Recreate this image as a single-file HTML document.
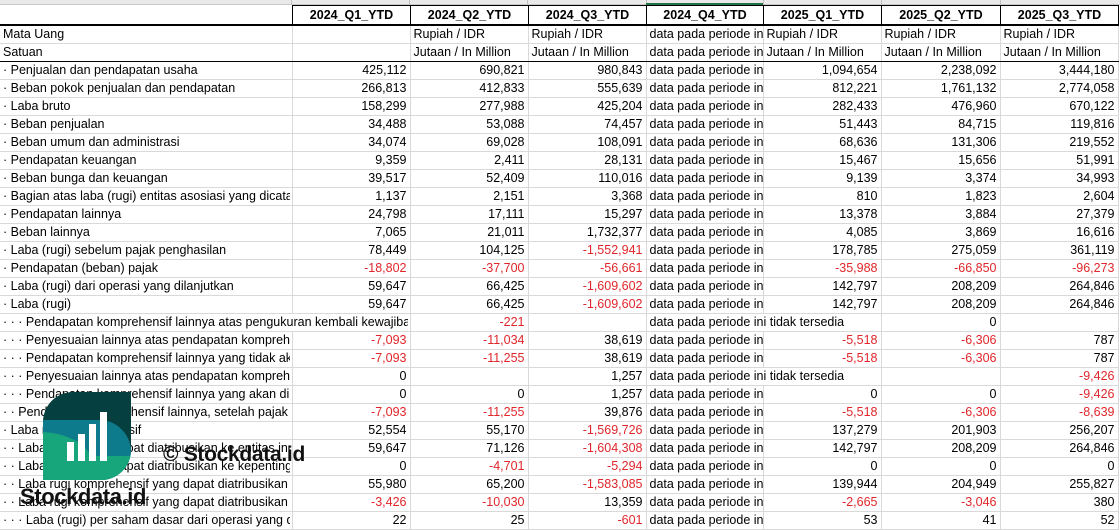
<!DOCTYPE html>
<html><head><meta charset="utf-8">
<style>
body{margin:0;width:1120px;height:530px;overflow:hidden;background:#fff;font-family:"Liberation Sans",Arial,sans-serif;position:relative}
.top{position:absolute;left:0;top:0;width:1120px;height:5px;background:#e9e9e9;border-bottom:1px solid #c8c8c8;box-sizing:border-box}
.top i{position:absolute;top:0;height:5px;width:1px;background:#c0c0c0}
table{position:absolute;left:0;top:5px;width:1118px;border-collapse:collapse;table-layout:fixed;font-size:12.5px;color:#000}
td{height:17px;padding:0 2px 0 3px;border:1px solid #d9d9d9;white-space:nowrap;overflow:hidden;line-height:17px;text-overflow:clip;max-width:0}
td>div{overflow:hidden;white-space:nowrap}
tr.h td{height:18px;font-weight:bold;text-align:center;border:1px solid #000;border-bottom:2px solid #000}
tr.h td.a{border-left:none;border-top:none}
tr.s td{border-bottom:1.5px solid #000}
td.n{text-align:right;padding-right:3px}
.r{color:#e0262b}
td:first-child{border-left:none}
.wm1{position:absolute;left:163px;top:443px;font-weight:bold;font-size:21px;letter-spacing:-0.3px;color:#111}
.wm2{position:absolute;left:20px;top:484px;font-weight:bold;font-size:22px;letter-spacing:-0.4px;color:#111}
</style></head><body>
<div class="top"><i style="left:291px"></i><i style="left:409px"></i><i style="left:527px"></i><i style="left:646px"></i><i style="left:763px"></i><i style="left:881px"></i><i style="left:1000px"></i><div style="position:absolute;left:646px;width:117px;top:3px;height:2px;background:#217346"></div></div>
<table>
<colgroup><col style="width:292px"><col style="width:118px"><col style="width:118px"><col style="width:118px"><col style="width:117px"><col style="width:118px"><col style="width:119px"><col style="width:118px"></colgroup>
<tr class="h"><td class="a"></td><td>2024_Q1_YTD</td><td>2024_Q2_YTD</td><td>2024_Q3_YTD</td><td>2024_Q4_YTD</td><td>2025_Q1_YTD</td><td>2025_Q2_YTD</td><td>2025_Q3_YTD</td></tr>
<tr><td>Mata Uang</td><td></td><td>Rupiah / IDR</td><td>Rupiah / IDR</td><td>data pada periode ini</td><td>Rupiah / IDR</td><td>Rupiah / IDR</td><td>Rupiah / IDR</td></tr>
<tr class="s"><td>Satuan</td><td></td><td>Jutaan / In Million</td><td>Jutaan / In Million</td><td>data pada periode ini</td><td>Jutaan / In Million</td><td>Jutaan / In Million</td><td>Jutaan / In Million</td></tr>
<tr><td>· Penjualan dan pendapatan usaha</td><td class="n">425,112</td><td class="n">690,821</td><td class="n">980,843</td><td>data pada periode ini</td><td class="n">1,094,654</td><td class="n">2,238,092</td><td class="n">3,444,180</td></tr>
<tr><td>· Beban pokok penjualan dan pendapatan</td><td class="n">266,813</td><td class="n">412,833</td><td class="n">555,639</td><td>data pada periode ini</td><td class="n">812,221</td><td class="n">1,761,132</td><td class="n">2,774,058</td></tr>
<tr><td>· Laba bruto</td><td class="n">158,299</td><td class="n">277,988</td><td class="n">425,204</td><td>data pada periode ini</td><td class="n">282,433</td><td class="n">476,960</td><td class="n">670,122</td></tr>
<tr><td>· Beban penjualan</td><td class="n">34,488</td><td class="n">53,088</td><td class="n">74,457</td><td>data pada periode ini</td><td class="n">51,443</td><td class="n">84,715</td><td class="n">119,816</td></tr>
<tr><td>· Beban umum dan administrasi</td><td class="n">34,074</td><td class="n">69,028</td><td class="n">108,091</td><td>data pada periode ini</td><td class="n">68,636</td><td class="n">131,306</td><td class="n">219,552</td></tr>
<tr><td>· Pendapatan keuangan</td><td class="n">9,359</td><td class="n">2,411</td><td class="n">28,131</td><td>data pada periode ini</td><td class="n">15,467</td><td class="n">15,656</td><td class="n">51,991</td></tr>
<tr><td>· Beban bunga dan keuangan</td><td class="n">39,517</td><td class="n">52,409</td><td class="n">110,016</td><td>data pada periode ini</td><td class="n">9,139</td><td class="n">3,374</td><td class="n">34,993</td></tr>
<tr><td><div>· Bagian atas laba (rugi) entitas asosiasi yang dicatat</div></td><td class="n">1,137</td><td class="n">2,151</td><td class="n">3,368</td><td>data pada periode ini</td><td class="n">810</td><td class="n">1,823</td><td class="n">2,604</td></tr>
<tr><td>· Pendapatan lainnya</td><td class="n">24,798</td><td class="n">17,111</td><td class="n">15,297</td><td>data pada periode ini</td><td class="n">13,378</td><td class="n">3,884</td><td class="n">27,379</td></tr>
<tr><td>· Beban lainnya</td><td class="n">7,065</td><td class="n">21,011</td><td class="n">1,732,377</td><td>data pada periode ini</td><td class="n">4,085</td><td class="n">3,869</td><td class="n">16,616</td></tr>
<tr><td>· Laba (rugi) sebelum pajak penghasilan</td><td class="n">78,449</td><td class="n">104,125</td><td class="n r">-1,552,941</td><td>data pada periode ini</td><td class="n">178,785</td><td class="n">275,059</td><td class="n">361,119</td></tr>
<tr><td>· Pendapatan (beban) pajak</td><td class="n r">-18,802</td><td class="n r">-37,700</td><td class="n r">-56,661</td><td>data pada periode ini</td><td class="n r">-35,988</td><td class="n r">-66,850</td><td class="n r">-96,273</td></tr>
<tr><td>· Laba (rugi) dari operasi yang dilanjutkan</td><td class="n">59,647</td><td class="n">66,425</td><td class="n r">-1,609,602</td><td>data pada periode ini</td><td class="n">142,797</td><td class="n">208,209</td><td class="n">264,846</td></tr>
<tr><td>· Laba (rugi)</td><td class="n">59,647</td><td class="n">66,425</td><td class="n r">-1,609,602</td><td>data pada periode ini</td><td class="n">142,797</td><td class="n">208,209</td><td class="n">264,846</td></tr>
<tr><td colspan="2"><div>· · · Pendapatan komprehensif lainnya atas pengukuran kembali kewajiban imbalan pasti</div></td><td class="n r">-221</td><td></td><td colspan="2"><div>data pada periode ini tidak tersedia</div></td><td class="n">0</td><td></td></tr>
<tr><td><div>· · · Penyesuaian lainnya atas pendapatan komprehensif</div></td><td class="n r">-7,093</td><td class="n r">-11,034</td><td class="n">38,619</td><td>data pada periode ini</td><td class="n r">-5,518</td><td class="n r">-6,306</td><td class="n">787</td></tr>
<tr><td><div>· · · Pendapatan komprehensif lainnya yang tidak akan</div></td><td class="n r">-7,093</td><td class="n r">-11,255</td><td class="n">38,619</td><td>data pada periode ini</td><td class="n r">-5,518</td><td class="n r">-6,306</td><td class="n">787</td></tr>
<tr><td><div>· · · Penyesuaian lainnya atas pendapatan komprehensif</div></td><td class="n">0</td><td></td><td class="n">1,257</td><td colspan="2"><div>data pada periode ini tidak tersedia</div></td><td></td><td class="n r">-9,426</td></tr>
<tr><td><div>· · · Pendapatan komprehensif lainnya yang akan direklasifikasi</div></td><td class="n">0</td><td class="n">0</td><td class="n">1,257</td><td>data pada periode ini</td><td class="n">0</td><td class="n">0</td><td class="n r">-9,426</td></tr>
<tr><td>· · Pendapatan komprehensif lainnya, setelah pajak</td><td class="n r">-7,093</td><td class="n r">-11,255</td><td class="n">39,876</td><td>data pada periode ini</td><td class="n r">-5,518</td><td class="n r">-6,306</td><td class="n r">-8,639</td></tr>
<tr><td>· Laba rugi komprehensif</td><td class="n">52,554</td><td class="n">55,170</td><td class="n r">-1,569,726</td><td>data pada periode ini</td><td class="n">137,279</td><td class="n">201,903</td><td class="n">256,207</td></tr>
<tr><td><div>· · Laba (rugi) yang dapat diatribusikan ke entitas induk</div></td><td class="n">59,647</td><td class="n">71,126</td><td class="n r">-1,604,308</td><td>data pada periode ini</td><td class="n">142,797</td><td class="n">208,209</td><td class="n">264,846</td></tr>
<tr><td><div>· · Laba (rugi) yang dapat diatribusikan ke kepentingan</div></td><td class="n">0</td><td class="n r">-4,701</td><td class="n r">-5,294</td><td>data pada periode ini</td><td class="n">0</td><td class="n">0</td><td class="n">0</td></tr>
<tr><td><div>· · Laba rugi komprehensif yang dapat diatribusikan</div></td><td class="n">55,980</td><td class="n">65,200</td><td class="n r">-1,583,085</td><td>data pada periode ini</td><td class="n">139,944</td><td class="n">204,949</td><td class="n">255,827</td></tr>
<tr><td><div>· · Laba rugi komprehensif yang dapat diatribusikan</div></td><td class="n r">-3,426</td><td class="n r">-10,030</td><td class="n">13,359</td><td>data pada periode ini</td><td class="n r">-2,665</td><td class="n r">-3,046</td><td class="n">380</td></tr>
<tr><td><div>· · · Laba (rugi) per saham dasar dari operasi yang dilanjutkan</div></td><td class="n">22</td><td class="n">25</td><td class="n r">-601</td><td>data pada periode ini</td><td class="n">53</td><td class="n">41</td><td class="n">52</td></tr>
</table>
<svg style="position:absolute;left:43px;top:392px" width="88" height="88" viewBox="0 0 88 88">
<defs><clipPath id="c"><path d="M30 0H88V58A30 30 0 0 1 58 88H0V30A30 30 0 0 1 30 0Z"/></clipPath></defs>
<g clip-path="url(#c)">
<rect width="88" height="88" fill="#053f40"/>
<path d="M0 28H56A32 32 0 0 1 88 60V88H0Z" fill="#0e7b8d"/>
<path d="M0 40C25 42 40 50 48 64H88V88H0Z" fill="#17a57c"/>
</g>
<rect x="24" y="50" width="7" height="19" fill="#fff"/>
<rect x="35" y="42" width="7" height="27" fill="#fff"/>
<rect x="46" y="32" width="7" height="37" fill="#fff"/>
<rect x="57" y="20" width="7" height="49" fill="#fff"/>
</svg>
<div class="wm1">© Stockdata.id</div>
<div class="wm2">Stockdata.id</div>
</body></html>
